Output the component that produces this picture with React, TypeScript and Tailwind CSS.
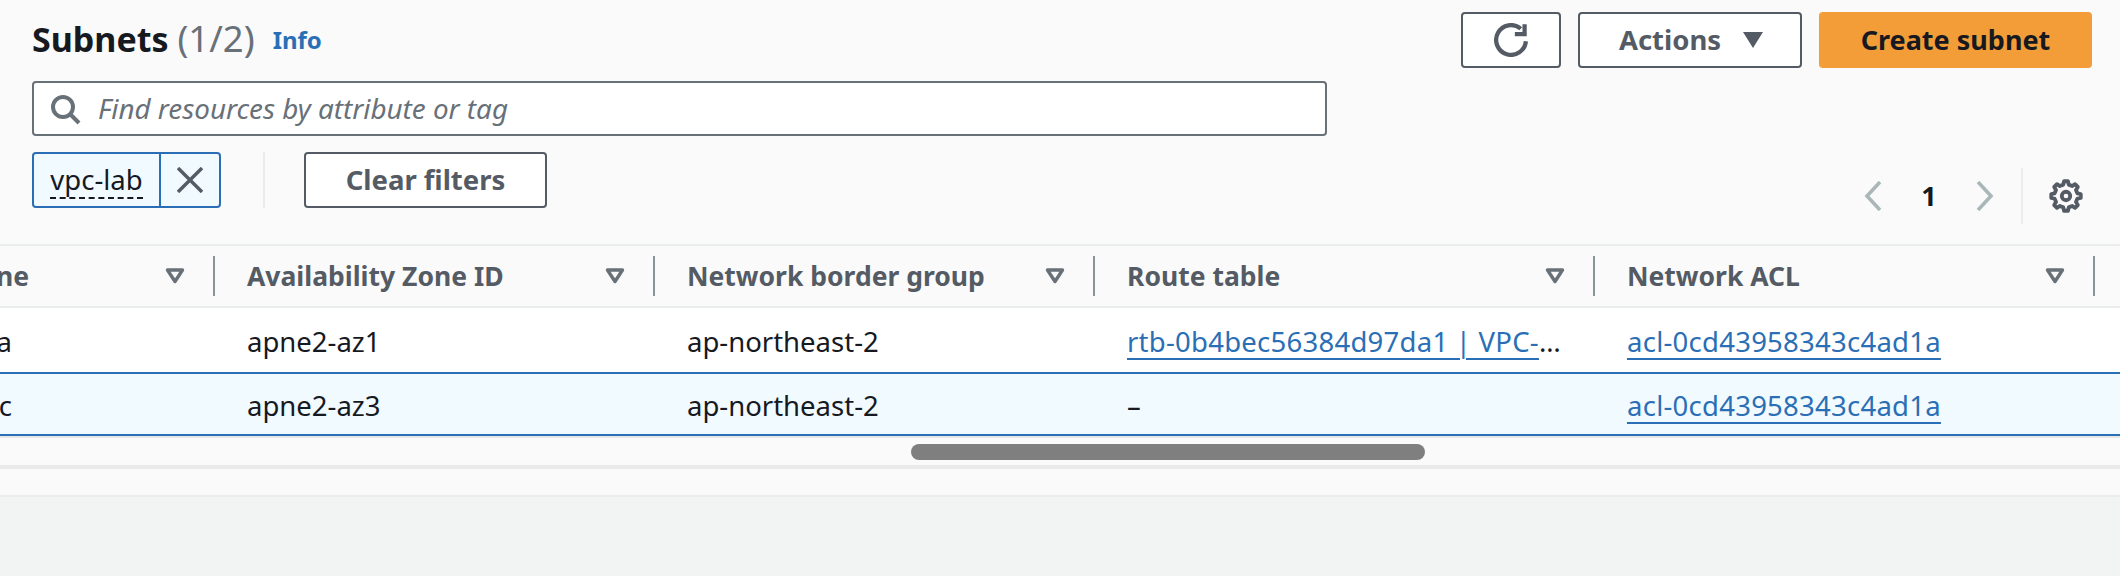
function FilterIcon() {
  return (
    <svg viewBox="0 0 20 16" className="w-5 h-4 shrink-0" fill="none" stroke="#687078" strokeWidth="3.4" strokeLinejoin="round">
      <path d="M2.5 2h15L10 13.5z" />
    </svg>
  );
}

function gearPath() {
  const teeth = 8;
  const outer = 7;
  const inner = 5.5;
  const pts: string[] = [];
  for (let i = 0; i < teeth; i++) {
    const c = (i * 2 * Math.PI) / teeth;
    const s = (2 * Math.PI) / teeth;
    const angles: [number, number][] = [
      [c - s * 0.3, inner],
      [c - s * 0.17, outer],
      [c + s * 0.17, outer],
      [c + s * 0.3, inner],
    ];
    for (const [a, r] of angles) {
      pts.push(`${(8 + r * Math.sin(a)).toFixed(2)} ${(8 - r * Math.cos(a)).toFixed(2)}`);
    }
  }
  return `M${pts.join("L")}Z`;
}

function HeaderCell({ label, width, clip }: { label: string; width: string; clip?: boolean }) {
  return (
    <div className={`${width} shrink-0 h-full relative flex items-center pt-[2px]`}>
      {clip ? (
        <div className="w-full overflow-hidden whitespace-nowrap flex justify-end pr-[186px]">
          <span className="shrink-0">{label}</span>
        </div>
      ) : (
        <span className="pl-[32px] whitespace-nowrap">{label}</span>
      )}
      <div className="absolute right-[30px] top-[22px]">
        <FilterIcon />
      </div>
      <div className="absolute right-0 top-[10px] h-10 w-[2px] bg-[#879596]" />
    </div>
  );
}

function BodyCell({ width, children, clip }: { width: string; children: React.ReactNode; clip?: boolean }) {
  return (
    <div className={`${width} shrink-0 h-full flex items-center pt-[3px]`}>
      {clip ? (
        <div className="w-full overflow-hidden whitespace-nowrap flex justify-end pr-[203px]">
          <span className="shrink-0">{children}</span>
        </div>
      ) : (
        <div className="pl-[32px] w-full">{children}</div>
      )}
    </div>
  );
}

function Link({ children }: { children: React.ReactNode }) {
  return <a className="text-[#2a6fb5] tracking-[0.25px] underline decoration-2 underline-offset-[6px]">{children}</a>;
}

export default function App() {
  return (
    <div className="w-[2120px] h-[576px] overflow-hidden bg-[#f2f3f3] text-[#16191f] font-['Noto_Sans',sans-serif]">
      <div className="h-[244px] bg-[#fafafa] flex justify-between pl-[32px] pr-[28px]">
        <div className="w-[1295px]">
          <div className="h-[81px] flex items-center pb-[4px] gap-[18px]">
            <h1 className="text-[34px] leading-none font-bold">
              Subnets <span className="text-[36.5px] font-normal text-[#687078]">(1/2)</span>
            </h1>
            <span className="text-[#2a6fb5] text-[24px] font-bold pt-[3px]">Info</span>
          </div>
          <div className="h-[55px] bg-white border-2 border-[#687078] rounded-[4px] flex items-center pl-[15px] gap-[17px]">
            <svg viewBox="0 0 16 16" className="w-[32px] h-[32px]" fill="none" stroke="#687078" strokeWidth="2">
              <circle cx="7" cy="7" r="5" />
              <path d="M15 15l-4.5-4.5" />
            </svg>
            <span className="text-[27.8px] italic text-[#687078]">Find resources by attribute or tag</span>
          </div>
          <div className="mt-[16px] flex items-stretch h-[56px]">
            <div className="w-[189px] flex border-2 border-[#2a6fb5] rounded-[4px] bg-[#f1faff]">
              <div className="w-[127px] flex items-center justify-center border-r-2 border-[#2a6fb5]">
                <span className="text-[27.5px] leading-[35px] border-b-2 border-dashed border-[#16191f]">vpc-lab</span>
              </div>
              <div className="flex-1 flex items-center justify-center">
                <svg viewBox="0 0 26 26" className="w-[26px] h-[26px]" fill="none" stroke="#545b64" strokeWidth="3.4">
                  <path d="M1 1l24 24M25 1L1 25" />
                </svg>
              </div>
            </div>
            <div className="ml-[42px] w-[2px] bg-[#eaeded]" />
            <div className="ml-[39px] w-[243px] bg-white border-2 border-[#545b64] rounded-[4px] flex items-center justify-center text-[27.5px] font-bold text-[#545b64]">
              Clear filters
            </div>
          </div>
        </div>
        <div className="pt-[12px] flex flex-col items-end">
          <div className="flex gap-[17px] h-[56px]">
            <div className="w-[100px] bg-white border-2 border-[#545b64] rounded-[4px] flex items-center justify-center">
              <svg viewBox="0 0 16 16" className="w-[34px] h-[34px]" fill="none" stroke="#545b64" strokeWidth="2">
                <path d="M15 8.6a7 7 0 1 1-2.4-5.9" />
                <path d="M14.4 0.6v4.6h-4.6" />
              </svg>
            </div>
            <div className="w-[224px] bg-white border-2 border-[#545b64] rounded-[4px] flex items-center justify-center gap-[22px] pl-[2px] text-[27.5px] font-bold text-[#545b64]">
              Actions
              <svg viewBox="0 0 20 16" className="w-5 h-4" fill="#545b64">
                <path d="M0 0h20L10 16z" />
              </svg>
            </div>
            <div className="w-[273px] bg-[#f29d38] rounded-[4px] flex items-center justify-center text-[27px] font-bold">
              Create subnet
            </div>
          </div>
          <div className="mt-[100px] h-[56px] flex items-center text-[#16191f]">
            <svg viewBox="0 0 18 30" className="w-[18px] h-[30px]" fill="none" stroke="#aab7b8" strokeWidth="3.6">
              <path d="M16 1L3 15l13 14" />
            </svg>
            <span className="ml-[37px] w-[20px] text-center text-[27px] font-bold">1</span>
            <svg viewBox="0 0 18 30" className="ml-[37px] w-[18px] h-[30px]" fill="none" stroke="#aab7b8" strokeWidth="3.6">
              <path d="M2 1l13 14L2 29" />
            </svg>
            <div className="ml-[27px] w-[2px] h-full bg-[#eaeded]" />
            <svg viewBox="0 0 16 16" className="ml-[26px] mr-[9px] w-[34px] h-[34px]" fill="none" stroke="#545b64" strokeWidth="1.8" strokeLinejoin="round">
              <path d={gearPath()} />
              <circle cx="8" cy="8" r="2" />
            </svg>
          </div>
        </div>
      </div>

      <div className="h-[60px] bg-[#fafafa] border-y-2 border-[#eaeded] box-content flex text-[26.5px] font-bold text-[#545b64]">
        <HeaderCell label="Availability Zone" width="w-[215px]" clip />
        <HeaderCell label="Availability Zone ID" width="w-[440px]" />
        <HeaderCell label="Network border group" width="w-[440px]" />
        <HeaderCell label="Route table" width="w-[500px]" />
        <HeaderCell label="Network ACL" width="w-[500px]" />
      </div>

      <div className="h-[64px] bg-white flex text-[27.5px]">
        <BodyCell width="w-[215px]" clip>ap-northeast-2a</BodyCell>
        <BodyCell width="w-[440px]">apne2-az1</BodyCell>
        <BodyCell width="w-[440px]">ap-northeast-2</BodyCell>
        <BodyCell width="w-[500px]">
          <div className="w-[434px] truncate">
            <Link>rtb-0b4bec56384d97da1 | VPC-lab-private-rt</Link>
          </div>
        </BodyCell>
        <BodyCell width="w-[500px]">
          <Link>acl-0cd43958343c4ad1a</Link>
        </BodyCell>
      </div>
      <div className="h-[64px] bg-[#f1faff] border-y-2 border-[#2a6fb5] flex text-[27.5px]">
        <BodyCell width="w-[215px]" clip>ap-northeast-2c</BodyCell>
        <BodyCell width="w-[440px]">apne2-az3</BodyCell>
        <BodyCell width="w-[440px]">ap-northeast-2</BodyCell>
        <BodyCell width="w-[500px]">–</BodyCell>
        <BodyCell width="w-[500px]">
          <Link>acl-0cd43958343c4ad1a</Link>
        </BodyCell>
      </div>

      <div className="h-[26px] bg-[#fafafa] border-t-2 border-[#e6e8e8] box-content flex items-center pl-[911px] pt-[1px]">
        <div className="w-[514px] h-4 rounded-full bg-[#7f7f7f]" />
      </div>
      <div className="h-[26px] bg-[#fafafa] border-t-4 border-b-2 border-t-[#eaeaea] border-b-[#eaeded] box-content" />
    </div>
  );
}
